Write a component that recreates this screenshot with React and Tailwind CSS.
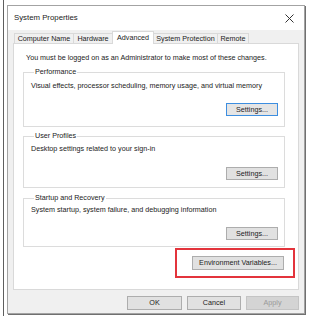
const Btn = ({ w, h = "h-[13px]", focus, disabled, children }) => (
  <div
    className={`${w} ${h} flex items-center justify-center border ${
      disabled
        ? "border-[#c4c4c4] bg-[#d4d4d4] text-[#9a9a9a]"
        : focus
        ? "border-[#3d8ee0] bg-[#e5e5e5]"
        : "border-[#adadad] bg-[#e1e1e1]"
    }`}
  >
    {children}
  </div>
);

const Group = ({ title, text, mt, descMt, btnMt, pb, focus }) => (
  <fieldset className={`${mt} ml-[9px] w-[262px] border border-[#dcdcdc] pl-[7px] pr-[6px] ${pb}`}>
    <legend className="ml-[3px] px-[1px] leading-[10px]">{title}</legend>
    <div className={descMt}>{text}</div>
    <div className={`${btnMt} flex justify-end`}>
      <Btn w="w-[52px]" focus={focus}>Settings...</Btn>
    </div>
  </fieldset>
);

const tabs = [
  { label: "Computer Name", w: "w-[60px]" },
  { label: "Hardware", w: "w-[40px]" },
  { label: "Advanced", w: "w-[42px]", active: true },
  { label: "System Protection", w: "w-[65px]" },
  { label: "Remote", w: "w-[32px]" },
];

export default function App() {
  return (
    <div className="w-[311px] h-[325px] bg-white overflow-hidden flex font-['Liberation_Sans',Arial,sans-serif] text-[7.2px] leading-[10px] text-[#222]">
      {/* edge of the window behind */}
      <div className="w-[7px] h-full flex flex-col">
        <div className="ml-[3px] w-px h-[316px] bg-[#5e5e5e]" />
      </div>

      <div className="mt-[5px] w-[298px] h-[309px] border border-[#a3a3a3] bg-[#f0f0f0] flex flex-col shadow-[1px_1px_0_#707070]">
        {/* title bar */}
        <div className="h-[24px] bg-white flex items-center justify-between pl-[6px] pr-[10px]">
          <span className="text-[7.8px]">System Properties</span>
          <svg width="9" height="9" viewBox="0 0 9 9">
            <path d="M0.5 0.5L8.5 8.5M8.5 0.5L0.5 8.5" stroke="#333" strokeWidth="1" />
          </svg>
        </div>

        <div className="px-[5px]">
          {/* tabs */}
          <div className="h-[12px] mt-[1px] ml-[1px] flex items-end">
            {tabs.map((t, i) => (
              <div
                key={t.label}
                className={`${t.w} ${i > 0 ? "-ml-px" : ""} flex items-center justify-center border border-b-0 border-[#d9d9d9] ${
                  t.active ? "h-[13px] -mb-px bg-white relative z-10" : "h-[10px] bg-[#f0f0f0]"
                }`}
              >
                {t.label}
              </div>
            ))}
          </div>

          {/* panel */}
          <div className="h-[247px] bg-white border border-[#d9d9d9]">
            <div className="pt-[9px] pl-[12px]">
              You must be logged on as an Administrator to make most of these changes.
            </div>

            <Group
              title="Performance"
              text="Visual effects, processor scheduling, memory usage, and virtual memory"
              mt="mt-[4px]"
              descMt="mt-[4px]"
              btnMt="mt-[12px]"
              pb="pb-[10px]"
              focus
            />
            <Group
              title="User Profiles"
              text="Desktop settings related to your sign-in"
              mt="mt-[4px]"
              descMt="mt-[3px]"
              btnMt="mt-[13px]"
              pb="pb-[7px]"
            />
            <Group
              title="Startup and Recovery"
              text="System startup, system failure, and debugging information"
              mt="mt-[5px]"
              descMt="mt-[2px]"
              btnMt="mt-[12px]"
              pb="pb-[6px]"
            />

            <div className="mt-[1px] pr-[3px] flex justify-end">
              <div className="w-[120px] h-[30px] border-2 border-[#e3343c] flex items-center justify-end pr-[9px]">
                <Btn w="w-[92px]" h="h-[14px]">Environment Variables...</Btn>
              </div>
            </div>
          </div>
        </div>

        {/* footer buttons */}
        <div className="mt-[6px] pr-[5px] flex justify-end gap-[5px]">
          <Btn w="w-[55px]" h="h-[14px]">OK</Btn>
          <Btn w="w-[54px]" h="h-[14px]">Cancel</Btn>
          <Btn w="w-[53px]" h="h-[14px]" disabled>Apply</Btn>
        </div>
      </div>
    </div>
  );
}
